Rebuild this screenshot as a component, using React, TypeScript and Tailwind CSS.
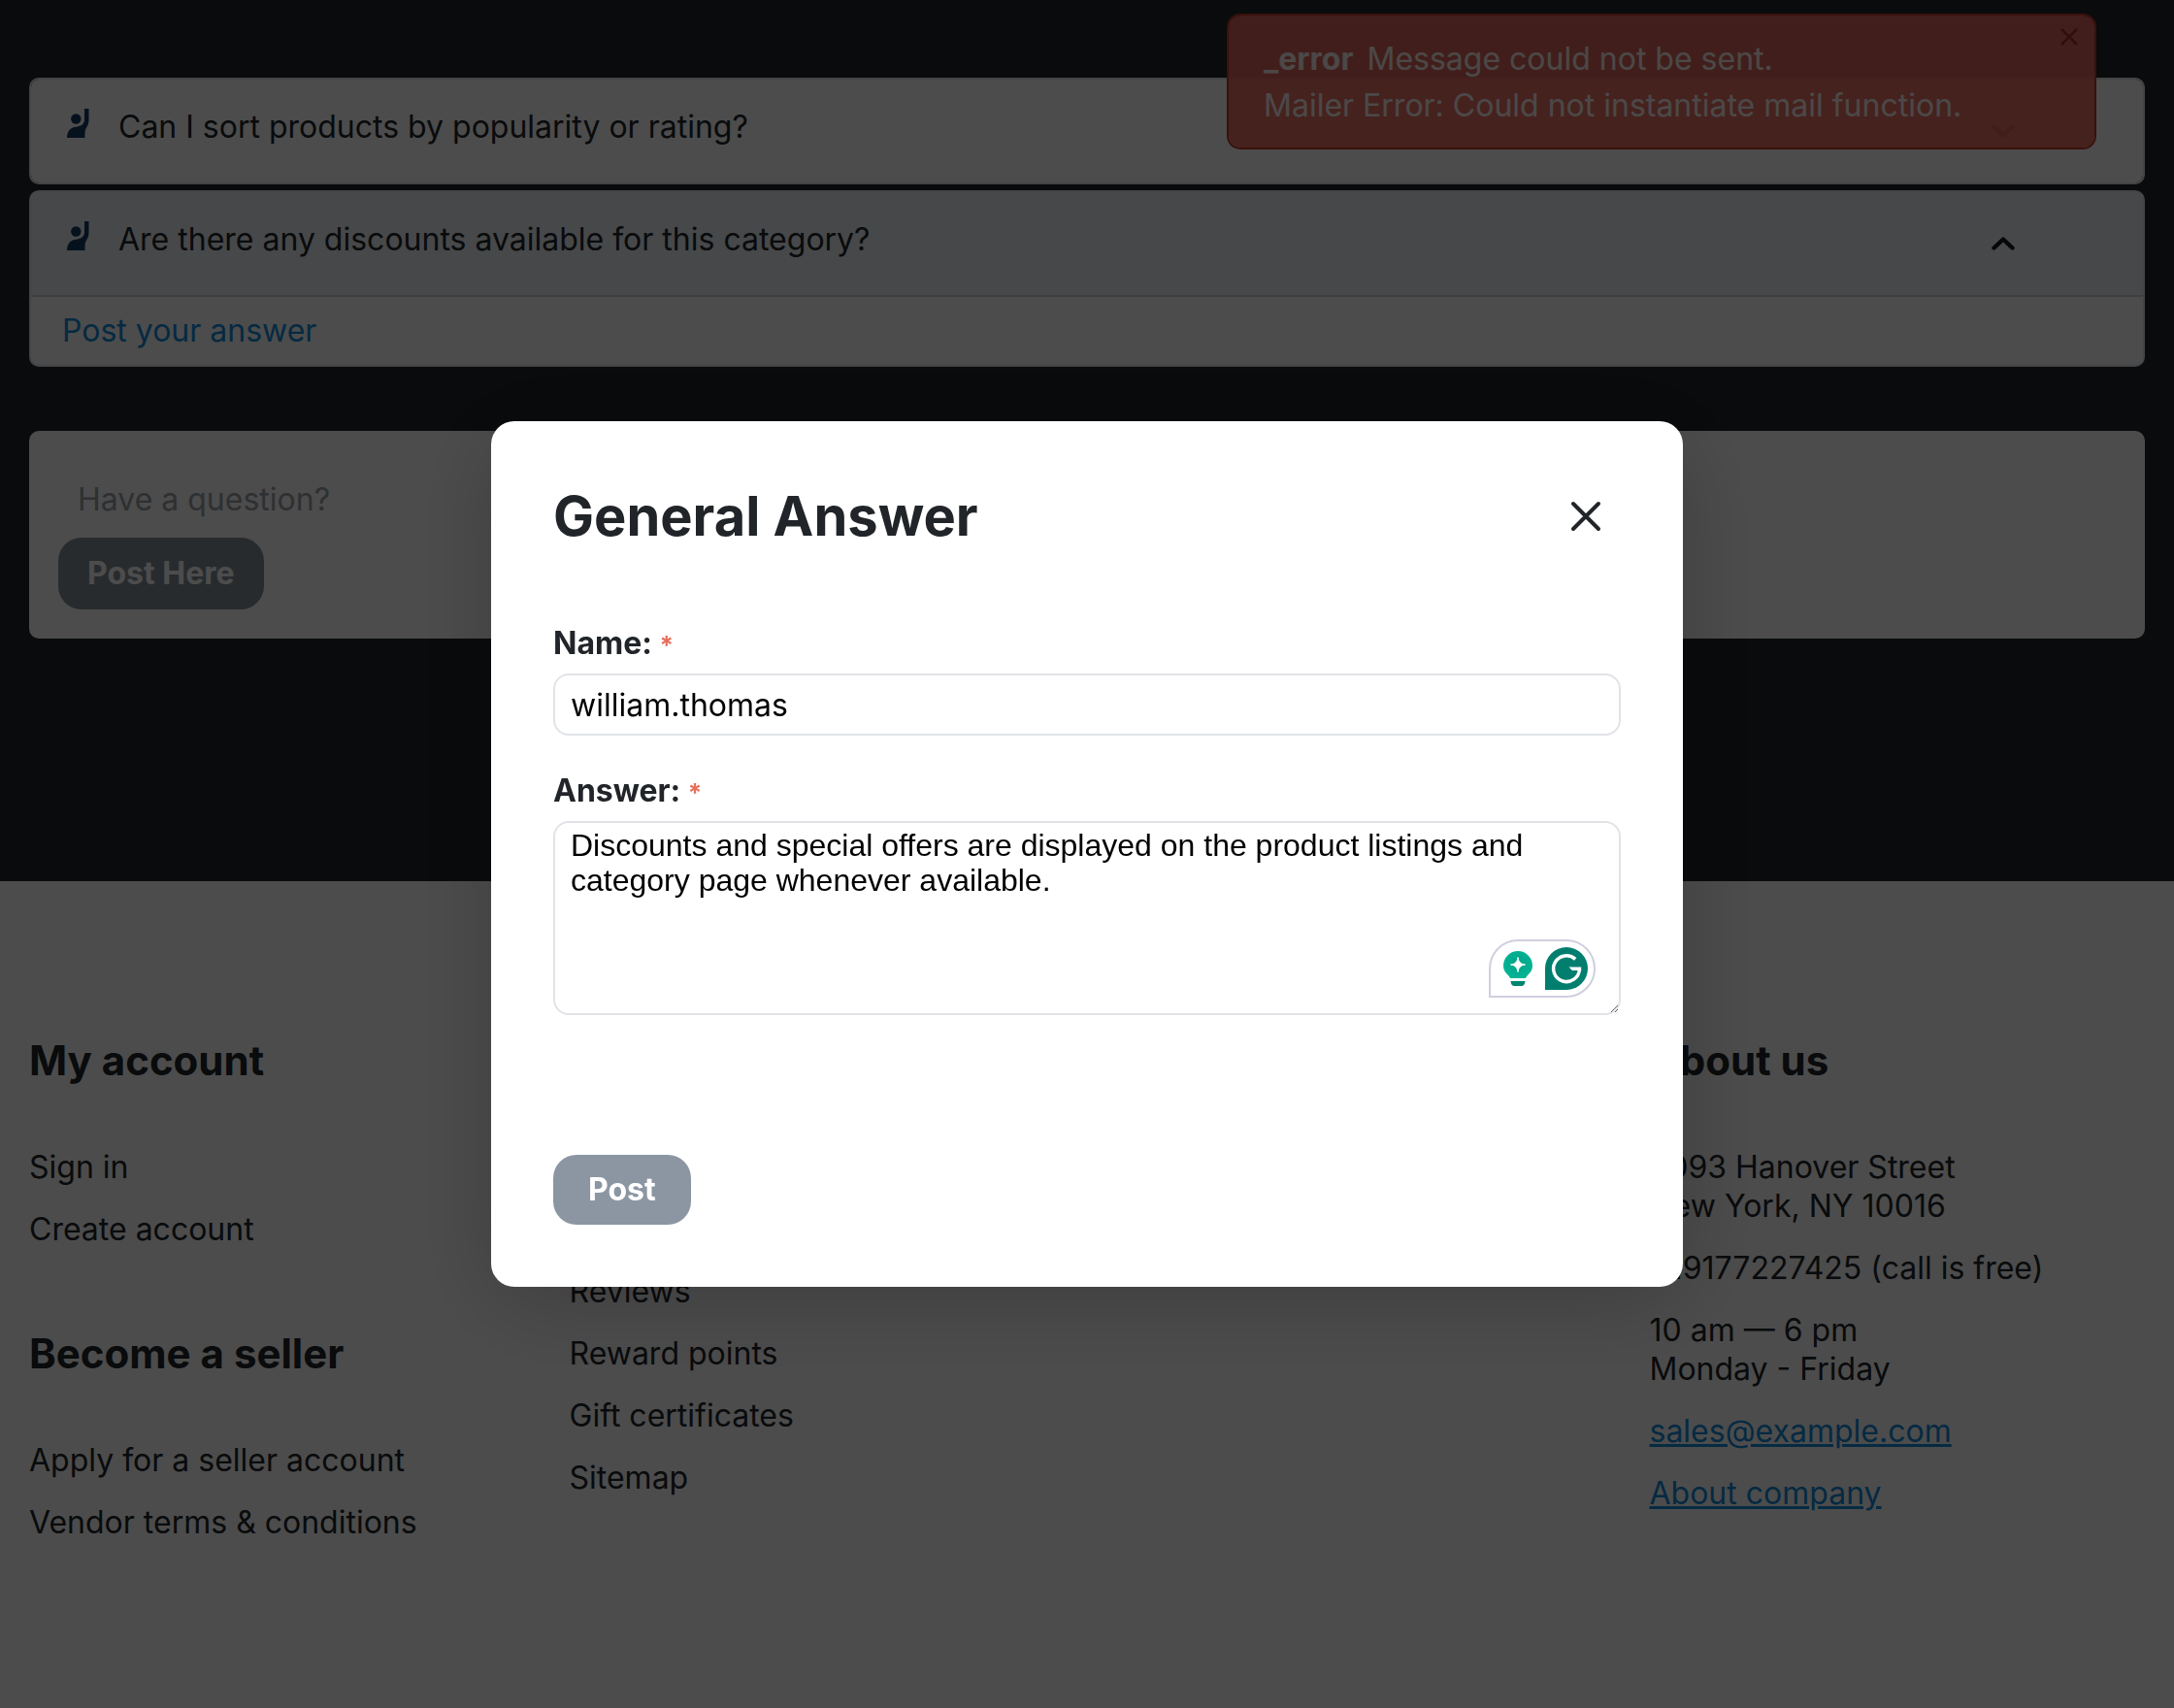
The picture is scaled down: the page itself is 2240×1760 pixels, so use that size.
import { useState } from "react";

interface Question {
    text: string;
    open: boolean;
}

const questions: Question[] = [
    { text: "Can I sort products by popularity or rating?", open: false },
    { text: "Are there any discounts available for this category?", open: true },
];

function RaisedHandIcon() {
    return (
        <svg className="w-6 h-8 shrink-0 text-[#143967]" viewBox="0 -1 24 32" fill="currentColor" aria-hidden="true">
            <circle cx="9.3" cy="10.5" r="5.200" />
            <path d="M18 0h4.500v12c0 4-1.800 6.500-3.200 9-.8 2-.8 4-.8 9H0c0-5 2-9 6-10.500 2-.8 5-.7 8-2 2.500-1 4-3.500 4-6z" />
        </svg>
    );
}

function Chevron({ open }: { open: boolean }) {
    return (
        <svg
            className={`w-8 h-8 text-[#16191c] ${open ? "" : "rotate-180"}`}
            viewBox="0 0 32 32"
            fill="none"
            stroke="currentColor"
            aria-hidden="true"
        >
            <path d="M6.500 20.500 16 11.500l9.500 9" strokeWidth={4.400} strokeLinecap="round" strokeLinejoin="round" />
        </svg>
    );
}

function QuestionCard({ question }: { question: Question }) {
    return (
        <article className="border-2 border-[#e0e3e7] rounded-[10px] bg-white overflow-hidden">
            <button
                type="button"
                aria-expanded={question.open}
                className={`w-full h-[106px] flex items-start text-left pl-[37px] pr-32 pt-[29px] ${question.open ? "bg-[#eff2f6]" : "bg-white"}`}
            >
                <RaisedHandIcon />
                <span className="ml-[29px] leading-[48px] -mt-1">{question.text}</span>
                <span className="ml-auto mt-2">
                    <Chevron open={question.open} />
                </span>
            </button>
            {question.open && (
                <div className="border-t-2 border-[#d0d3d8] px-8 pt-[11px] pb-[11px]">
                    <a href="#answer" className="block w-fit leading-[48px] text-[#128cdc]">
                        Post your answer
                    </a>
                </div>
            )}
        </article>
    );
}

function ErrorToast() {
    return (
        <div
            role="alert"
            className="absolute right-20 top-3.5 w-[896px] rounded-[14px] border-2 border-[#c0392b] bg-[#e66a5e]/95 bg-clip-padding pl-9 pr-20 pt-[21px] pb-[19px] leading-[48px] text-white/90"
        >
            <p>
                <strong className="mr-3.5 font-bold">_error</strong>
                Message could not be sent.
            </p>
            <p>Mailer Error: Could not instantiate mail function.</p>
            <button type="button" aria-label="Close" className="absolute right-4 top-3 text-[#a32c28]">
                <svg className="w-5 h-5" viewBox="0 0 20 20" fill="none" stroke="currentColor" strokeWidth={2.500}>
                    <path d="M2 2l16 16M18 2 2 18" />
                </svg>
            </button>
        </div>
    );
}

function FooterTitle({ children }: { children: string }) {
    return <h2 className="text-[42px] leading-[50px] font-bold mb-[65px]">{children}</h2>;
}

function FooterLinks({ links }: { links: string[] }) {
    return (
        <ul className="space-y-6">
            {links.map((link) => (
                <li key={link}>
                    <a href="#">{link}</a>
                </li>
            ))}
        </ul>
    );
}

function WritingBadge() {
    return (
        <div className="absolute right-6.5 bottom-4.5 w-[110px] h-15 flex items-center gap-[13px] pl-[13px] bg-white border-2 border-[#cfcfe0] rounded-full rounded-bl-none">
            <svg className="w-[30px] h-9" viewBox="0 0 30 36" aria-hidden="true">
                <defs>
                    <radialGradient id="bulb" cx="50%" cy="45%" r="55%">
                        <stop offset="0" stopColor="#00a487" />
                        <stop offset="1" stopColor="#06b495" />
                    </radialGradient>
                </defs>
                <path d="M15 0a15 15 0 0 1 15 15c0 5-2.500 7.500-5 10-1 1-1.600 2-2 3H7c-.4-1-1-2-2-3-2.500-2.500-5-5-5-10A15 15 0 0 1 15 0z" fill="url(#bulb)" />
                <path d="M15 6.500c.8 5 2.800 6.800 7.500 7.500-4.700.8-6.700 2.700-7.500 7.500-.8-4.800-2.800-6.700-7.500-7.500 4.700-.7 6.700-2.500 7.500-7.500z" fill="#fff" stroke="#fff" strokeLinejoin="round" />
                <path d="M7.500 31h15c-.3 3.300-1.500 5-4 5h-7c-2.500 0-3.700-1.700-4-5z" fill="#00856f" />
            </svg>
            <svg className="w-11 h-11" viewBox="0 0 44 44" aria-hidden="true">
                <path d="M22 0a22 22 0 0 1 0 44H0V22A22 22 0 0 1 22 0z" fill="#027e6f" />
                <path d="M31.200 12.400A13.400 13.400 0 1 0 35.400 23" fill="none" stroke="#fff" strokeWidth="3.500" />
                <path d="M24.500 20.500h12.700v3.500H28z" fill="#fff" />
            </svg>
        </div>
    );
}

function AnswerModal() {
    const [name, setName] = useState("william.thomas");
    const [answer, setAnswer] = useState(
        "Discounts and special offers are displayed on the product listings and category page whenever available."
    );

    return (
        <div className="fixed inset-0 flex items-center justify-center bg-black/70">
            <form
                role="dialog"
                aria-labelledby="modal-title"
                className="w-full max-w-[1228px] rounded-3xl bg-white p-16 shadow-[0_16px_96px_rgba(0,0,0,0.2)]"
            >
                <div className="flex items-center justify-between mb-[77px]">
                    <h1 id="modal-title" className="text-[56px] leading-[68px] font-bold">
                        General Answer
                    </h1>
                    <button type="button" aria-label="Close" className="px-4 py-3.5">
                        <svg className="w-10 h-10" viewBox="0 0 40 40" fill="none" stroke="currentColor" strokeWidth={4} strokeLinecap="round">
                            <path d="M7 7l26 26M33 7 7 33" />
                        </svg>
                    </button>
                </div>

                <label htmlFor="name" className="block font-bold mb-[11px]">
                    Name: <span className="text-[26px] leading-8 text-[#e76f5c]">*</span>
                </label>
                <input
                    id="name"
                    value={name}
                    onChange={(e) => setName(e.target.value)}
                    className="block w-full h-16 px-4 border-2 border-[#e1e3e7] rounded-2xl text-black"
                />

                <label htmlFor="answer" className="block font-bold mt-[37px] mb-[11px]">
                    Answer: <span className="text-[26px] leading-8 text-[#e76f5c]">*</span>
                </label>
                <div className="relative">
                    <textarea
                        id="answer"
                        value={answer}
                        onChange={(e) => setAnswer(e.target.value)}
                        className="block w-full h-50 px-4 py-[5px] border-2 border-[#e1e3e7] rounded-2xl text-black leading-9 font-['Liberation_Sans',sans-serif]"
                    />
                    <WritingBadge />
                </div>

                <button type="submit" className="mt-36 h-18 px-9 rounded-3xl bg-[#8c96a3] text-white font-bold">
                    Post
                </button>
            </form>
        </div>
    );
}

export default function App() {
    return (
        <div className="relative min-h-screen flex flex-col bg-[#212529] font-['Inter',sans-serif] text-[32px] leading-10 text-[#212529]">
            <main className="px-[30px] pt-20 pb-[250px]">
                <div className="space-y-1.5">
                    {questions.map((question) => (
                        <QuestionCard key={question.text} question={question} />
                    ))}
                </div>

                <section className="mt-[66px] rounded-[10px] bg-white px-[30px] pt-[46px] pb-[30px]">
                    <input
                        aria-label="Have a question?"
                        placeholder="Have a question?"
                        className="block w-full h-12 mb-4 px-5 placeholder:text-[#9aa0a8]"
                    />
                    <button type="button" className="h-[74px] px-[30px] rounded-3xl bg-[#86909b] text-white font-bold">
                        Post Here
                    </button>
                </section>
            </main>

            <footer className="grow grid grid-cols-4 gap-x-[46px] bg-white px-[30px] pt-40 pb-20">
                <div className="space-y-[83px]">
                    <section>
                        <FooterTitle>My account</FooterTitle>
                        <FooterLinks links={["Sign in", "Create account"]} />
                    </section>
                    <section>
                        <FooterTitle>Become a seller</FooterTitle>
                        <FooterLinks links={["Apply for a seller account", "Vendor terms & conditions"]} />
                    </section>
                </div>
                <div className="pt-[243px]">
                    <FooterLinks links={["Reviews", "Reward points", "Gift certificates", "Sitemap"]} />
                </div>
                <address className="col-start-4 not-italic">
                    <FooterTitle>About us</FooterTitle>
                    <div className="space-y-6">
                        <p>
                            3093 Hanover Street
                            <br />
                            New York, NY 10016
                        </p>
                        <p>+19177227425 (call is free)</p>
                        <p>
                            10 am — 6 pm
                            <br />
                            Monday - Friday
                        </p>
                        <p>
                            <a href="mailto:sales@example.com" className="text-[#128cdc] underline">
                                sales@example.com
                            </a>
                        </p>
                        <p>
                            <a href="#about" className="text-[#128cdc] underline">
                                About company
                            </a>
                        </p>
                    </div>
                </address>
            </footer>

            <ErrorToast />
            <AnswerModal />
        </div>
    );
}
